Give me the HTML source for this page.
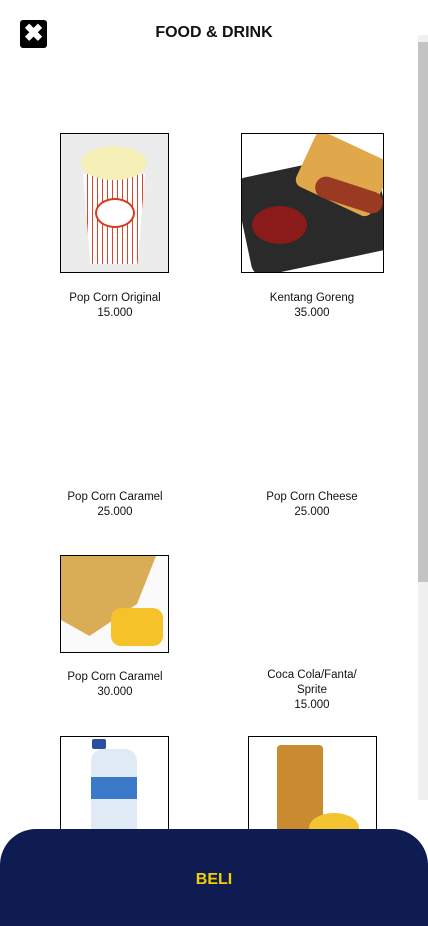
<!DOCTYPE html>
<html><head><meta charset="utf-8"><style>
*{margin:0;padding:0;box-sizing:border-box}
body{width:428px;height:926px;position:relative;overflow:hidden;background:#fff;font-family:"Liberation Sans",sans-serif;color:#111}
.a{position:absolute}
.img{position:absolute;border:1px solid #000;overflow:hidden}
.lbl{position:absolute;text-align:center;font-size:11.5px;line-height:15px;width:140px}
</style></head><body>
<div class="a" style="left:20px;top:20px;width:27px;height:28px;background:#000;border-radius:3px;color:#fff;font-weight:bold;font-size:24px;line-height:28px;text-align:center">✖</div>
<div class="a" style="left:0;width:428px;top:24px;text-align:center;font-weight:bold;font-size:16px">FOOD &amp; DRINK</div>
<div class="a" style="left:418px;top:35px;width:10px;height:765px;background:#f0f0f0"></div>
<div class="a" style="left:418px;top:42px;width:10px;height:540px;background:#c4c4c4"></div>

<div class="img" style="left:60px;top:133px;width:109px;height:140px;background:#ececec">
 <div class="a" style="left:22px;top:40px;width:62px;height:90px;background:repeating-linear-gradient(90deg,#fff 0 4px,#e0442a 4px 5px);clip-path:polygon(0 0,100% 0,88% 100%,12% 100%)"></div>
 <div class="a" style="left:20px;top:12px;width:66px;height:34px;background:#f5efb8;border-radius:50%"></div>
 <div class="a" style="left:34px;top:64px;width:40px;height:30px;border:2px solid #d83a1f;border-radius:50%;background:#fff"></div>
</div>
<div class="img" style="left:241px;top:133px;width:143px;height:140px;background:#fff">
 <div class="a" style="left:0;top:30px;width:143px;height:100px;background:#2a2a2a;border-radius:12px;transform:rotate(-12deg)"></div>
 <div class="a" style="left:10px;top:72px;width:55px;height:38px;background:#8b1a1a;border-radius:50%"></div>
 <div class="a" style="left:60px;top:10px;width:83px;height:60px;background:#e0a84a;border-radius:8px;transform:rotate(25deg)"></div>
 <div class="a" style="left:72px;top:50px;width:70px;height:22px;background:#9a3a22;border-radius:11px;transform:rotate(18deg)"></div>
</div>
<div class="lbl" style="left:45px;top:291px">Pop Corn Original<br>15.000</div>
<div class="lbl" style="left:242px;top:291px">Kentang Goreng<br>35.000</div>

<div class="lbl" style="left:45px;top:490px">Pop Corn Caramel<br>25.000</div>
<div class="lbl" style="left:242px;top:490px">Pop Corn Cheese<br>25.000</div>

<div class="img" style="left:60px;top:555px;width:109px;height:98px;background:#fafafa">
 <div class="a" style="left:0;top:0;width:95px;height:80px;background:#d9ad55;clip-path:polygon(0 0,100% 0,80% 60%,30% 100%,0 80%)"></div>
 <div class="a" style="left:50px;top:52px;width:52px;height:38px;background:#f6c22a;border-radius:10px"></div>
</div>
<div class="lbl" style="left:45px;top:670px">Pop Corn Caramel<br>30.000</div>
<div class="lbl" style="left:242px;top:668px">Coca Cola/Fanta/<br>Sprite<br>15.000</div>

<div class="img" style="left:60px;top:736px;width:109px;height:100px;background:#fff">
 <div class="a" style="left:31px;top:2px;width:14px;height:10px;background:#2a4fa0;border-radius:2px"></div>
 <div class="a" style="left:30px;top:12px;width:46px;height:90px;background:#dfeaf5;border-radius:12px 12px 0 0"></div>
 <div class="a" style="left:30px;top:40px;width:46px;height:22px;background:#3a7ac8"></div>
</div>
<div class="img" style="left:248px;top:736px;width:129px;height:100px;background:#fff">
 <div class="a" style="left:28px;top:8px;width:46px;height:90px;background:#c98a30;border-radius:4px"></div>
 <div class="a" style="left:60px;top:76px;width:50px;height:30px;background:#f4c430;border-radius:50%"></div>
</div>

<div class="a" style="left:0;top:829px;width:428px;height:97px;background:#0e1c52;border-radius:36px 36px 0 0"></div>
<div class="a" style="left:0;width:428px;top:871px;text-align:center;color:#f5cd00;font-weight:bold;font-size:16px">BELI</div>
</body></html>
